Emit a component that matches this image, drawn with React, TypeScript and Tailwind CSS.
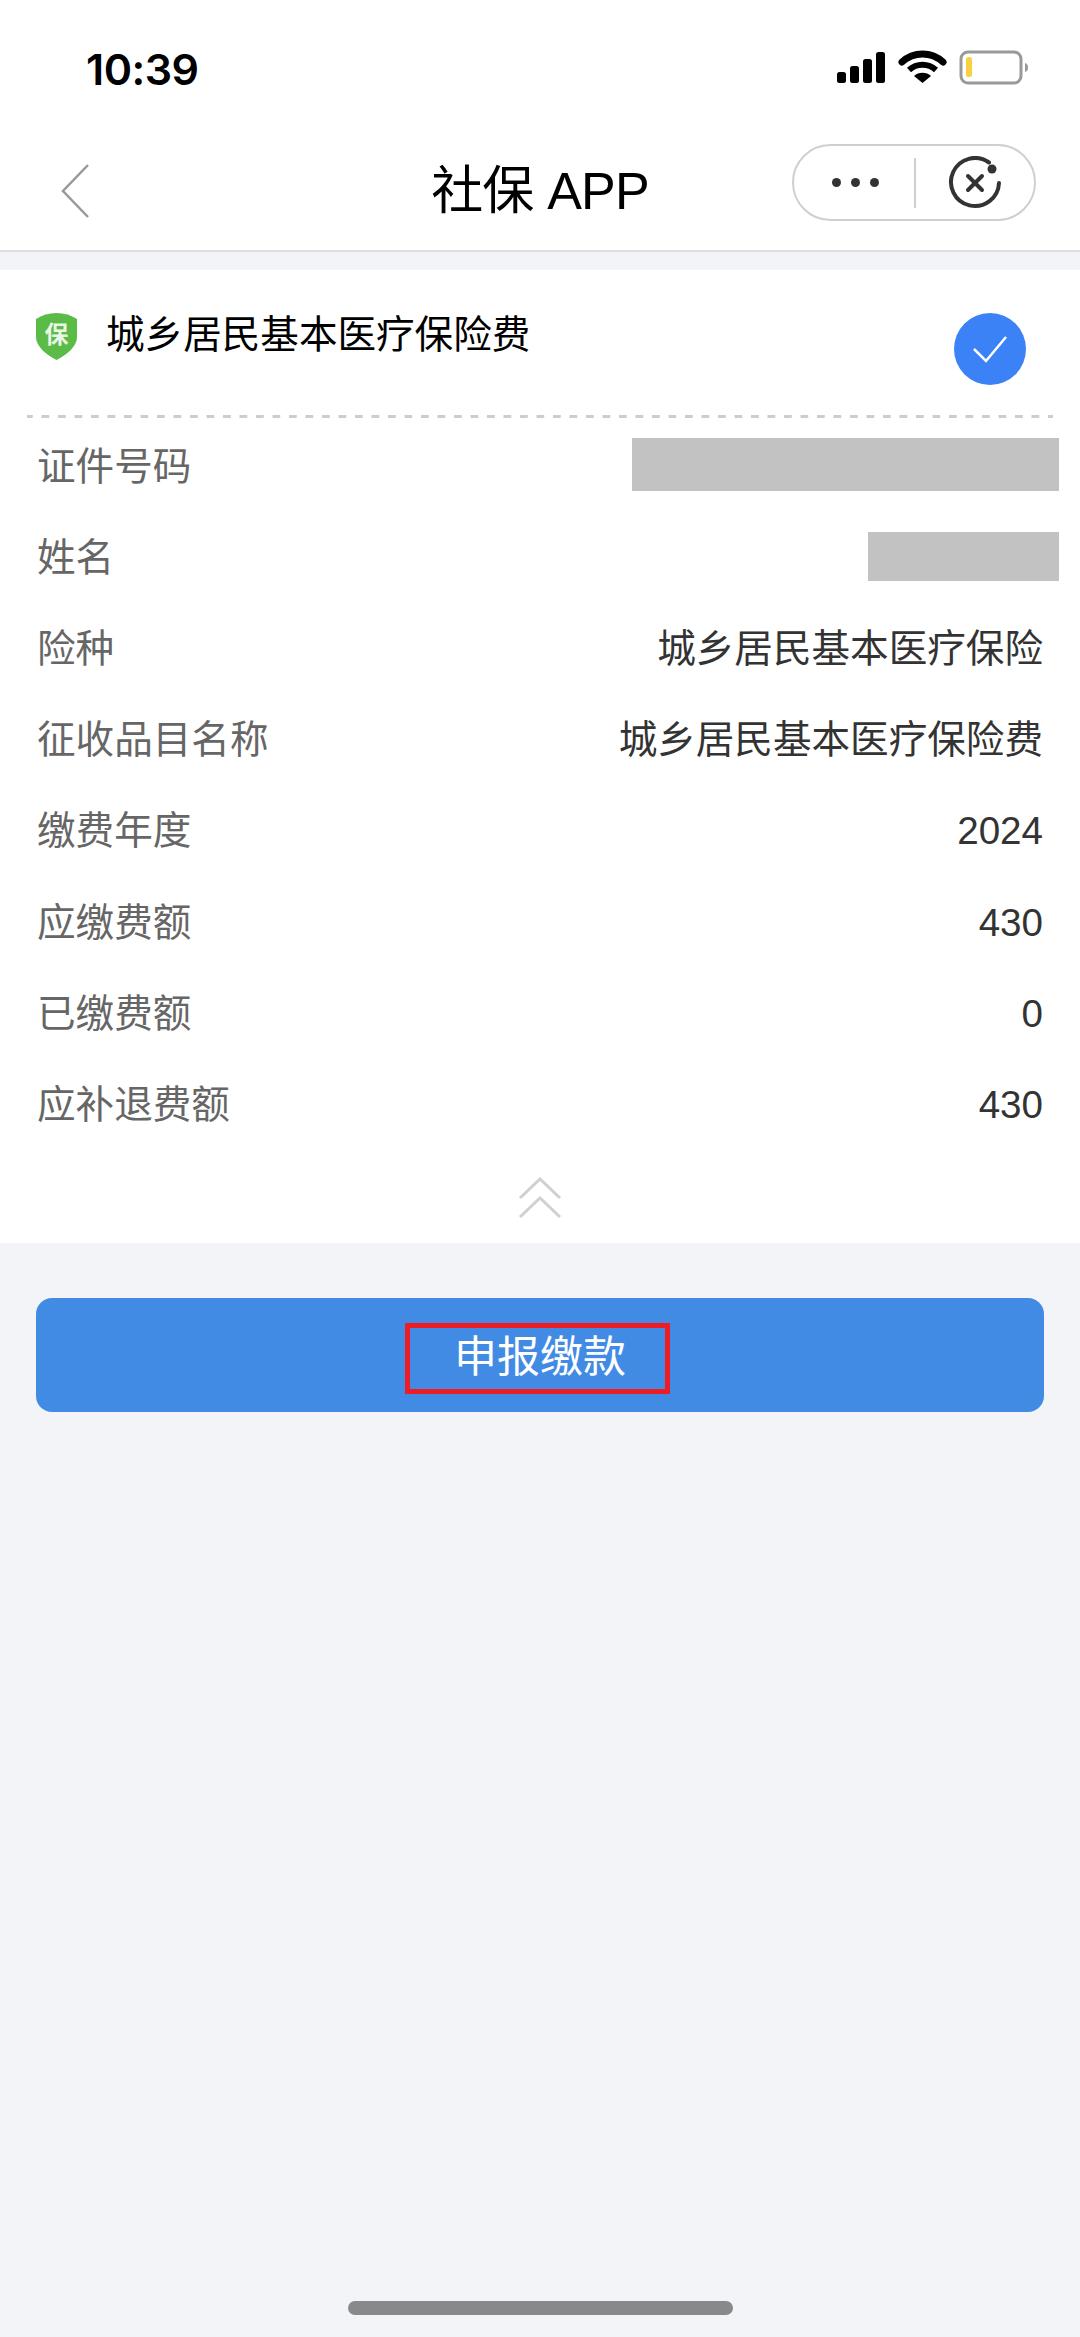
import React from "react";

const FONT = "font-['Liberation_Sans','Noto_Sans_CJK_SC',sans-serif]";

const rows = [
  { label: "证件号码", value: "", mask: "w-[427px] h-[53px] top-[17px]" },
  { label: "姓名", value: "", mask: "w-[191px] h-[49px] top-[20px]" },
  { label: "险种", value: "城乡居民基本医疗保险" },
  { label: "征收品目名称", value: "城乡居民基本医疗保险费" },
  { label: "缴费年度", value: "2024" },
  { label: "应缴费额", value: "430" },
  { label: "已缴费额", value: "0" },
  { label: "应补退费额", value: "430" },
];

const StatusIcons = () => (
  <div className="flex items-center">
    <svg width="192" height="36" viewBox="0 0 192 36" fill="none">
      <rect x="0" y="23" width="9" height="11" rx="2.500" fill="#000" />
      <rect x="13" y="17" width="9" height="17" rx="2.500" fill="#000" />
      <rect x="26" y="10" width="9" height="24" rx="2.500" fill="#000" />
      <rect x="39" y="3" width="9" height="31" rx="2.500" fill="#000" />
      <path d="M65 13a30 30 0 0 1 41 0" stroke="#000" strokeWidth="7" strokeLinecap="round" />
      <path d="M72 21a20 20 0 0 1 27 0" stroke="#000" strokeWidth="6" />
      <path d="M77 27 L85.500 34 L94 27 A13 13 0 0 0 77 27Z" fill="#000" />
      <rect x="124" y="3" width="60" height="31" rx="7" stroke="#999" strokeWidth="3" />
      <rect x="129" y="8" width="6" height="20" rx="2.500" fill="#f9d03f" />
      <path d="M188 14c2.500.6 3 2.500 3 4.500s-.5 3.900-3 4.500z" fill="#999" />
    </svg>
  </div>
);

const ShieldIcon = () => (
  <div className="relative w-[41px] h-[47px] shrink-0">
    <svg width="41" height="47" viewBox="0 0 41 47">
      <path
        d="M0 6C6 2 13 0 20.500 0S35 2 41 6V24C41 34 30 42 20.500 47C11 42 0 34 0 24Z"
        fill="#5abb46"
      />
    </svg>
    <span className="absolute inset-0 flex items-center justify-center text-[24px] font-bold leading-none text-[#eaf6e6] pb-[4px]">
      保
    </span>
  </div>
);

const CheckBadge = () => (
  <div className="w-[72px] h-[72px] rounded-full bg-[#3b82f6] flex items-center justify-center">
    <svg width="36" height="28" viewBox="0 0 36 28" fill="none">
      <path d="M2 14 L14 26 L34 2" stroke="#fff" strokeWidth="2.500" />
    </svg>
  </div>
);

export default function App() {
  return (
    <div className={`${FONT} w-[1080px] h-[2337px] bg-[#f3f4f8] flex flex-col overflow-hidden relative`}>
      <div className="bg-white h-[252px] border-b-2 border-[#dedede] flex flex-col">
        <div className="h-[144px] flex justify-between pl-[86px] pr-[51px] pt-[49px] items-start">
          <span className="font-['Inter'] text-[43px] leading-[42px] font-semibold text-black tracking-[-0.5px] mt-[-1px]">10:39</span>
          <StatusIcons />
        </div>
        <div className="relative flex justify-center">
          <span className="text-[52px] leading-[60px] text-black mt-[17px] tracking-[-0.8px]">社保 APP</span>
          <svg className="absolute left-[60px] top-[20px]" width="30" height="54" viewBox="0 0 30 54" fill="none">
            <path d="M28 1 L3 27 L28 53" stroke="#999" strokeWidth="2.500" />
          </svg>
          <div className="absolute left-[792px] top-0 w-[244px] h-[77px] rounded-full border-2 border-[#cfcfcf] flex items-center">
            <div className="w-[120px] flex justify-center gap-[10px] pl-[2px]">
              <span className="w-[9px] h-[9px] rounded-full bg-[#333]" />
              <span className="w-[9px] h-[9px] rounded-full bg-[#333]" />
              <span className="w-[9px] h-[9px] rounded-full bg-[#333]" />
            </div>
            <span className="w-[2px] h-[50px] bg-[#cfcfcf]" />
            <div className="flex-1 flex justify-center">
              <svg width="54" height="54" viewBox="0 0 54 54" fill="none">
                <path d="M41 6.500A24 24 0 1 0 51 27" stroke="#333" strokeWidth="4" strokeLinecap="round" />
                <path d="M20 20 L34 34 M34 20 L20 34" stroke="#333" strokeWidth="4" strokeLinecap="round" />
                <circle cx="44" cy="13" r="4.500" fill="#333" />
              </svg>
            </div>
          </div>
        </div>
      </div>

      <div className="bg-white mt-[18px] h-[973px] flex flex-col">
        <div className="h-[145px] flex justify-between pl-[36px] pr-[54px] pt-[43px] items-start">
          <div className="flex items-start gap-[29px]">
            <ShieldIcon />
            <span className="text-[38.600px] leading-[44px] text-black">城乡居民基本医疗保险费</span>
          </div>
          <CheckBadge />
        </div>
        <div className="mx-[27px] h-[3px] shrink-0 bg-[linear-gradient(90deg,#cdcdcd_8px,transparent_8px)] bg-[length:16.500px_3px] bg-[position:-2px_0]" />
        <div className="mt-[3px]">
          {rows.map((row) => (
            <div key={row.label} className="relative h-[91.200px] flex items-center justify-between px-[37px] text-[38.600px]">
              <span className="text-[#666]">{row.label}</span>
              <span className="text-[#333]">{row.value}</span>
              {row.mask && <div className={`absolute right-[21px] bg-[#c2c2c2] ${row.mask}`} />}
            </div>
          ))}
        </div>
        <div className="flex justify-center mt-[26px]">
          <svg width="44" height="42" viewBox="0 0 44 42" fill="none">
            <path d="M2 21 L22 2 L42 21 M2 40 L22 21 L42 40" stroke="#d0d0d0" strokeWidth="3" />
          </svg>
        </div>
      </div>

      <div className="mx-[36px] mt-[55px] h-[114px] rounded-[16px] bg-[#428be4] flex items-center justify-center">
        <div className="w-[265px] h-[71px] mt-[6px] mr-[5px] border-[5px] border-[#ee1c25] flex items-center justify-center pl-[5px] pb-[2px]">
          <span className="text-[43px] leading-none text-white">申报缴款</span>
        </div>
      </div>

      <div className="absolute bottom-[22px] left-[348px] w-[385px] h-[14px] rounded-full bg-[#88898b]" />
    </div>
  );
}
